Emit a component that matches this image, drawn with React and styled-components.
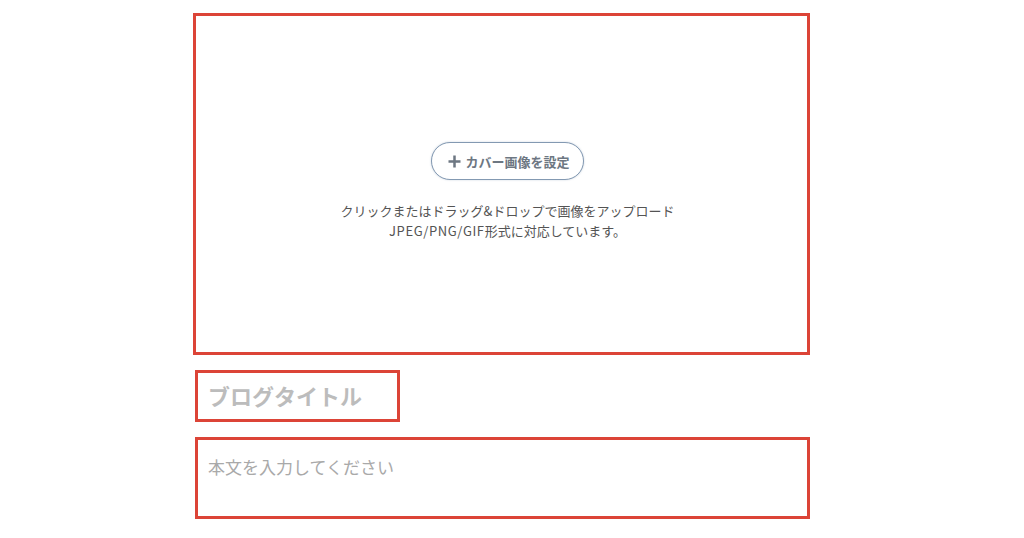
import styled, { createGlobalStyle } from "styled-components";

const GlobalStyle = createGlobalStyle`
  html, body {
    margin: 0;
    padding: 0;
    background: #ffffff;
  }
  body {
    font-family: "Noto Sans CJK JP", "Noto Sans", sans-serif;
  }
`;

const Page = styled.div`
  width: 1024px;
  height: 538px;
  padding: 13px 0 0 193px;
  box-sizing: border-box;
  display: flex;
  flex-direction: column;
  gap: 15px;
`;

const Outlined = styled.div`
  border: 3px solid #dc4437;
  box-sizing: border-box;
  background: #fff;
`;

const CoverBox = styled(Outlined)`
  width: 617px;
  height: 342px;
  display: flex;
  flex-direction: column;
  align-items: center;
  justify-content: center;
  padding: 15px 0 0 12px;
`;

const CoverButton = styled.button`
  width: 153px;
  height: 38px;
  border: 1.5px solid #8399b2;
  border-radius: 19px;
  background: #fff;
  box-shadow: 0 0 2px rgba(131, 153, 178, 0.45);
  display: flex;
  align-items: center;
  justify-content: center;
  gap: 3px;
  font-family: "Noto Sans CJK JP", sans-serif;
  font-size: 13px;
  font-weight: 700;
  color: #6d7782;
  padding: 0 0 0 2px;
  cursor: pointer;
`;

const Hint = styled.p`
  margin: 21px 0 0;
  text-align: center;
  font-size: 13px;
  line-height: 20px;
  color: #545454;
`;

const HintLatin = styled.span`
  letter-spacing: 0.6px;
`;

const TitleBox = styled(Outlined)`
  margin-left: 2px;
  width: 205px;
  height: 52px;
  display: flex;
  align-items: center;
  padding: 0 0 3px 10px;
  font-size: 22px;
  font-weight: 700;
  color: #bcbcbc;
`;

const BodyBox = styled(Outlined)`
  margin-left: 2px;
  width: 615px;
  height: 82px;
  padding: 14px 0 0 10px;
  font-size: 17px;
  color: #a9a9a9;
`;

const Plus = () => (
  <svg width="15" height="15" viewBox="0 0 15 15">
    <path d="M7.5 1.5v12M1.5 7.5h12" stroke="#6d7782" strokeWidth="2.5" />
  </svg>
);

export default function App() {
  return (
    <>
      <GlobalStyle />
      <Page>
        <CoverBox>
          <CoverButton>
            <Plus />
            カバー画像を設定
          </CoverButton>
          <Hint>
            クリックまたはドラッグ&ドロップで画像をアップロード
            <br />
            <HintLatin>JPEG/PNG/GIF</HintLatin>形式に対応しています。
          </Hint>
        </CoverBox>
        <TitleBox>ブログタイトル</TitleBox>
        <BodyBox>本文を入力してください</BodyBox>
      </Page>
    </>
  );
}
